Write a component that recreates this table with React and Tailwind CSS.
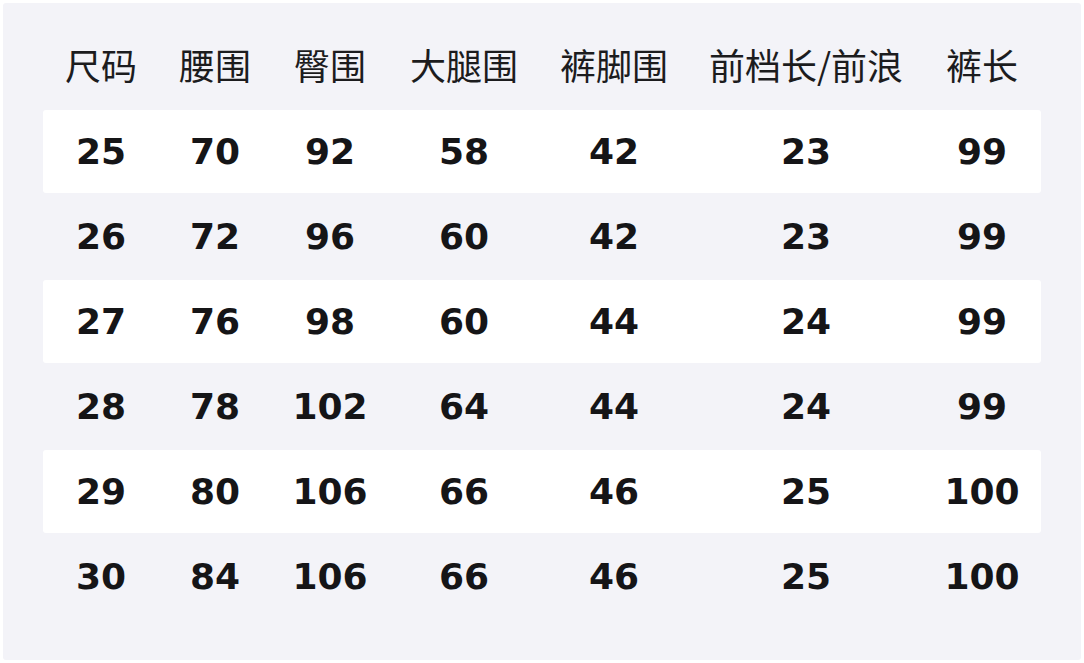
import React from "react";

const headers = ["尺码", "腰围", "臀围", "大腿围", "裤脚围", "前档长/前浪", "裤长"];
const rows = [
  ["25", "70", "92", "58", "42", "23", "99"],
  ["26", "72", "96", "60", "42", "23", "99"],
  ["27", "76", "98", "60", "44", "24", "99"],
  ["28", "78", "102", "64", "44", "24", "99"],
  ["29", "80", "106", "66", "46", "25", "100"],
  ["30", "84", "106", "66", "46", "25", "100"],
];

const cols = "grid grid-cols-[116px_112px_118px_150px_150px_234px_118px]";

export default function App() {
  return (
    <div className="w-[1084px] h-[663px] bg-white p-[3px]">
      <div className="w-[1078px] h-[657px] bg-[#f3f3f8] rounded-[3px] px-[40px] pt-[40px] pb-[40px]">
        <div
          className={`${cols} h-[67px] pt-[3px] text-[36px] leading-none text-[#1c1c1e]`}
          style={{ fontFamily: '"Noto Sans CJK SC", "Noto Sans", sans-serif' }}
        >
          {headers.map((h) => (
            <div key={h} className="text-center whitespace-nowrap">
              {h}
            </div>
          ))}
        </div>
        {rows.map((r, i) => (
          <div key={i} className="h-[85px]">
            <div
              className={`${cols} h-[83px] items-center rounded-[3px] text-[36px] leading-none font-bold text-[#151517] ${
                i % 2 === 0 ? "bg-white" : ""
              }`}
              style={{ fontFamily: '"DejaVu Sans", sans-serif' }}
            >
              {r.map((v, j) => (
                <div key={j} className="text-center">
                  {v}
                </div>
              ))}
            </div>
          </div>
        ))}
      </div>
    </div>
  );
}
